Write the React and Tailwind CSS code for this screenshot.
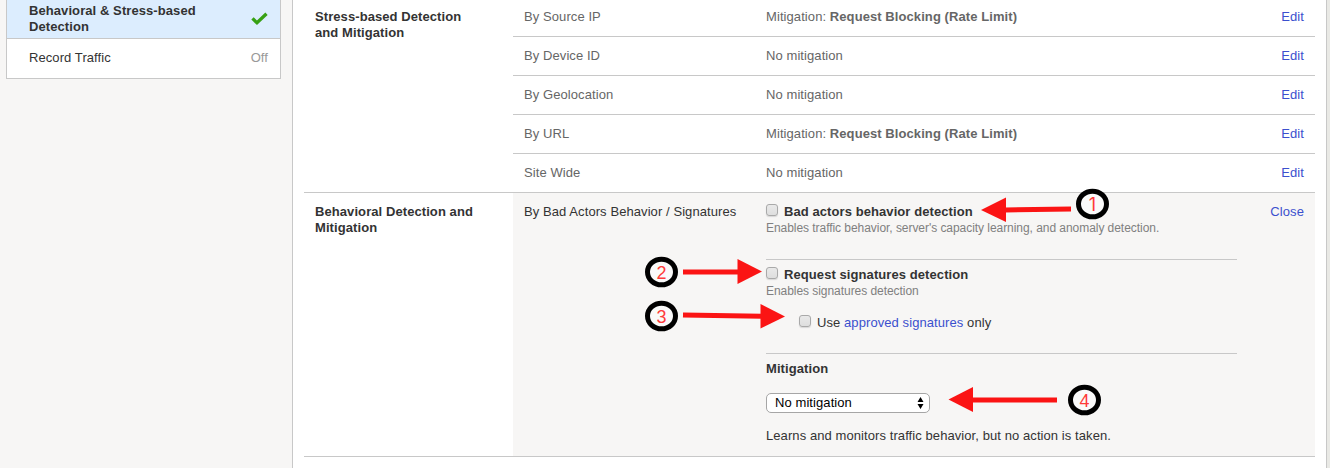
const rows = [
  ["By Source IP", true],
  ["By Device ID", false],
  ["By Geolocation", false],
  ["By URL", true],
  ["Site Wide", false],
];

function Checkbox() {
  return (
    <span className="block h-3 w-3 shrink-0 rounded-[3px] border border-[#a9a9a9] bg-linear-to-b from-[#e9e9e9] to-[#dedede] shadow-[0_1px_1px_#d8d8d8]" />
  );
}

function Marker({ x, y, n }) {
  return (
    <g>
      <ellipse cx={x} cy={y} rx="14" ry="12.8" fill="#fafafa" stroke="#000" strokeWidth="5" />
      <text
        x={x}
        y={y + 7}
        textAnchor="middle"
        fontSize="18"
        fill="#ff3b3b"
        fontFamily={n === "1" ? "Inter, sans-serif" : "Liberation Sans, sans-serif"}
      >
        {n}
      </text>
    </g>
  );
}

function Annotations() {
  return (
    <svg className="pointer-events-none absolute inset-0" width="1330" height="468" viewBox="0 0 1330 468">
      <g stroke="#fb1414" strokeWidth="5">
        <path d="M1005 210L1071 209" />
        <path d="M683 272H740" />
        <path d="M683 315L762 316.300" />
        <path d="M972 400H1057" />
      </g>
      <g fill="#fb1414">
        <path d="M981 210L1006 197.500V222z" />
        <path d="M762 271.500L737.500 259V284z" />
        <path d="M785 316.500L760.500 304V328.500z" />
        <path d="M948.500 399.500L973 387V412z" />
      </g>
      <Marker x={1092.500} y={204} n="1" />
      <Marker x={661.500} y={272} n="2" />
      <Marker x={661.500} y={316} n="3" />
      <Marker x={1084.500} y={400} n="4" />
    </svg>
  );
}

export default function App() {
  return (
    <div className="relative flex h-[468px] w-[1330px] overflow-hidden bg-[#f7f6f5] font-['Liberation_Sans',Arial,sans-serif] text-[13px] leading-4 tracking-[0.08px] text-[#333]">
      <aside className="w-[292px] shrink-0 pl-1.5">
        <div className="h-[79px] w-[275px] border-x border-b border-[#c8c8c8] bg-white">
          <div className="flex h-[39px] items-start justify-between border-b border-[#c8c8c8] bg-[#dcedfe] pr-3 pl-[22px]">
            <div className="mt-[3px] font-bold">
              Behavioral &amp; Stress-based
              <br />
              Detection
            </div>
            <svg className="mt-3 shrink-0" width="17" height="14" viewBox="0 0 17 14">
              <path d="M1.500 6.300L6 10.800L15.500 1.800" fill="none" stroke="#37a114" strokeWidth="3.300" />
            </svg>
          </div>
          <div className="flex justify-between pt-[11px] pr-3 pl-[22px]">
            <span>Record Traffic</span>
            <span className="text-[#999]">Off</span>
          </div>
        </div>
      </aside>

      <main className="h-full w-[1035px] shrink-0 border-x border-[#c8c8c8] bg-white pl-[11px]">
        <div className="w-[1011px]">
          <section className="flex h-[193px] border-b border-[#c8c8c8]">
            <h2 className="w-[209px] shrink-0 pt-[9px] pl-[11px] font-bold">
              Stress-based Detection
              <br />
              and Mitigation
            </h2>
            <div className="-mt-0.5 flex-1 text-[#666]">
              {rows.map(([name, blocked]) => (
                <div key={name} className="flex h-[39px] border-b border-[#c8c8c8] pt-[11px] pr-[11px] pl-[11px] last:border-b-0">
                  <span className="w-[242px]">{name}</span>
                  <span className="flex-1">
                    {blocked ? (
                      <>
                        Mitigation: <b>Request Blocking (Rate Limit)</b>
                      </>
                    ) : (
                      "No mitigation"
                    )}
                  </span>
                  <a className="text-[#3b50ce]">Edit</a>
                </div>
              ))}
            </div>
          </section>

          <section className="flex h-[264px] border-b border-[#c8c8c8]">
            <h2 className="w-[209px] shrink-0 pt-[11px] pl-[11px] font-bold">
              Behavioral Detection and
              <br />
              Mitigation
            </h2>
            <div className="flex flex-1 bg-[#f7f6f5] pt-[11px] pr-[11px] pl-[11px]">
              <span className="w-[242px] shrink-0">By Bad Actors Behavior / Signatures</span>
              <div className="w-[471px] shrink-0">
                <div className="h-14 border-b border-[#c8c8c8]">
                  <div className="flex gap-1.5">
                    <Checkbox />
                    <b>Bad actors behavior detection</b>
                  </div>
                  <p className="text-[12px] tracking-[-0.05px] text-[#808080]">
                    Enables traffic behavior, server&apos;s capacity learning, and anomaly detection.
                  </p>
                </div>
                <div className="h-[94px] border-b border-[#c8c8c8] pt-[7px]">
                  <div className="flex gap-1.5">
                    <Checkbox />
                    <b>Request signatures detection</b>
                  </div>
                  <p className="text-[12px] tracking-[-0.05px] text-[#808080]">Enables signatures detection</p>
                  <div className="mt-4 ml-[33px] flex gap-1.5">
                    <Checkbox />
                    <span>
                      Use <a className="text-[#3b50ce]">approved signatures</a> only
                    </span>
                  </div>
                </div>
                <div className="pt-[7px] font-bold">Mitigation</div>
                <div className="mt-4 flex h-5 w-[164px] items-center justify-between rounded-[5px] border border-[#a6a6a6] bg-white pr-[5px] pl-2 text-black">
                  <span>No mitigation</span>
                  <svg width="7" height="12" viewBox="0 0 7 12">
                    <path d="M.5 5L3.500 0L6.500 5zM.5 7L3.500 12L6.500 7z" />
                  </svg>
                </div>
                <p className="mt-[15px]">Learns and monitors traffic behavior, but no action is taken.</p>
              </div>
              <a className="ml-auto text-[#3b50ce]">Close</a>
            </div>
          </section>
        </div>
      </main>
      <div className="flex-1 bg-[#e9e9e5]" />
      <Annotations />
    </div>
  );
}
